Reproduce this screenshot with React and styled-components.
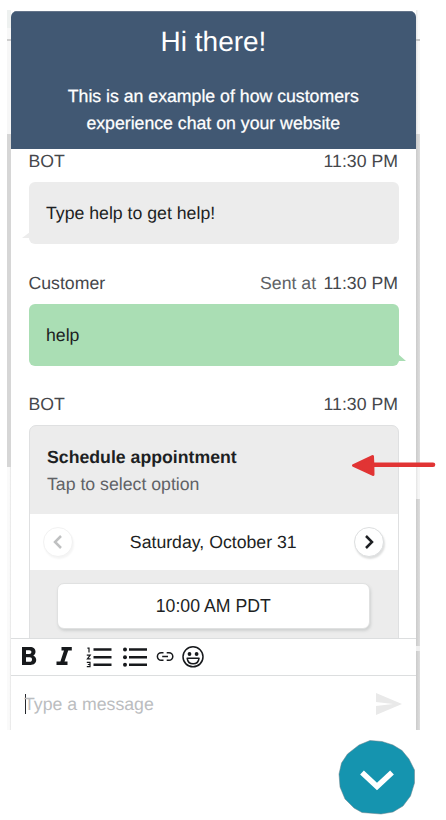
import React from "react";
import styled, { createGlobalStyle } from "styled-components";

const GlobalStyle = createGlobalStyle`
  * { box-sizing: border-box; }
  body {
    margin: 0;
    background: #fff;
    font-family: "Liberation Sans", Arial, sans-serif;
    font-size: 17.7px;
    color: #1d1f23;
    text-rendering: geometricPrecision;
  }
  svg { display: block; }
`;

const Page = styled.main`
  position: relative;
  width: 446px;
  height: 820px;
  overflow: hidden;
  padding: 10px 0 0 7px;
`;

const Stage = styled.div`
  display: flex;
  width: 413px;
  height: 720px;
`;

const Rail = styled.div`
  display: flex;
  flex-direction: column;
  flex: 0 0 4px;
`;

const RailPart = styled.div`
  flex: 0 0 ${(p) => p.$size}px;
  background: ${(p) => p.$tone};
`;

const Panel = styled.section`
  display: flex;
  flex-direction: column;
  width: 405px;
  height: 719px;
  margin-top: 1px;
  background: #fff;
  border-radius: 6px 6px 0 0;
  overflow: hidden;
`;

const Header = styled.header`
  flex: 0 0 138px;
  background: #415873;
  color: #fff;
  text-align: center;
  box-shadow: inset 0 1px 0 #64748a;
`;

const Title = styled.h1`
  margin: 0;
  padding-top: 14px;
  font-size: 28px;
  font-weight: 400;
  line-height: 34px;
`;

const Subtitle = styled.p`
  width: 310px;
  margin: 24px auto 0;
  padding-right: 0.5px;
  line-height: 27px;
  -webkit-text-stroke: 0.25px #fff;
`;

const Messages = styled.div`
  flex: 0 0 489px;
  padding: 0 17.5px 0 17.5px;
  overflow: hidden;
`;

const Message = styled.article`
  margin-bottom: 26.5px;
`;

const Meta = styled.div`
  display: flex;
  justify-content: space-between;
  height: 24px;
  margin-bottom: 9px;
  padding-right: 0.5px;
  line-height: 24px;
  color: #45474b;
`;

const Sent = styled.span`
  margin-right: 7.5px;
  color: #606266;
`;

const Bubble = styled.div`
  position: relative;
  height: 62px;
  padding-left: 17.5px;
  border-radius: 6px;
  line-height: 62px;
  background: ${(p) => (p.$own ? "#aadeb4" : "#ececec")};
`;

const Tail = styled.svg`
  position: absolute;
  bottom: 4px;
  ${(p) => (p.$own ? "right: -7px;" : "left: -7px;")}
  width: 8px;
  height: 8px;
  fill: ${(p) => (p.$own ? "#aadeb4" : "#ececec")};
`;

const Card = styled.div`
  height: 240px;
  border: 1px solid #dfe0e1;
  border-radius: 7px 7px 0 0;
  background: #ececec;
`;

const CardHead = styled.div`
  height: 88px;
  padding: 18px 17.5px 0;
  line-height: 27px;
`;

const CardTitle = styled.div`
  font-weight: 700;
`;

const CardHint = styled.div`
  color: #606266;
`;

const DateRow = styled.div`
  display: flex;
  align-items: center;
  justify-content: space-between;
  height: 56px;
  padding: 0 13.5px 0 13px;
  background: #fff;
`;

const RoundButton = styled.button`
  display: grid;
  place-items: center;
  width: 30px;
  height: 30px;
  padding: 0;
  border: 1px solid ${(p) => (p.$muted ? "#f2f2f2" : "#dddfe0")};
  border-radius: 50%;
  background: #fff;
  color: ${(p) => (p.$muted ? "#bfc0c1" : "#1d1f23")};
  box-shadow: 1px 2px 2px ${(p) => (p.$muted ? "#f5f5f5" : "#dedfdf")};
`;

const SlotArea = styled.div`
  padding: 13px 28px 0 27.5px;
`;

const Slot = styled.button`
  display: block;
  width: 100%;
  height: 46px;
  padding: 1px 0 0;
  border: 1px solid #e0e1e1;
  border-radius: 7px;
  background: #fff;
  box-shadow: 1px 2px 3px #cfd1d1;
  font: inherit;
  color: inherit;
`;

const Toolbar = styled.div`
  flex: 0 0 37px;
  border-top: 1px solid #dcdedf;
`;

const Composer = styled.div`
  display: flex;
  align-items: center;
  flex: 1;
  justify-content: space-between;
  padding: 2px 14px 0 14px;
  border-top: 1px solid #dcdedf;
  color: #bbbdc0;
`;

const Prompt = styled.div`
  display: flex;
  align-items: center;
`;

const Caret = styled.span`
  width: 1px;
  height: 20px;
  margin-right: -2px;
  background: #25282d;
`;

const Launcher = styled.button`
  position: absolute;
  left: 338px;
  top: 739px;
  width: 78px;
  height: 76px;
  padding: 0;
  border: 0;
  background: none;
`;

const Pointer = styled.svg`
  position: absolute;
  left: 351px;
  top: 453px;
`;

const leftRail = [
  [18, "#eef1f0"],
  [11, "#f8f8f8"],
  [2, "#cecece"],
  [93, "#f7f7f7"],
  [333, "#d6d6d6"],
  [263, "linear-gradient(90deg, #fafafa 60%, #e4e4e4)"],
];

const rightRail = [
  [29, "linear-gradient(90deg, #e6e6e6, #fafafa 60%)"],
  [2, "#c4c4c4"],
  [93, "linear-gradient(90deg, #e2e2e2, #f7f7f7 60%)"],
  [333, "linear-gradient(90deg, #cbcbcb, #dedede)"],
  [32, "linear-gradient(90deg, #e4e4e4, #f6f6f6 60%)"],
  [147, "linear-gradient(90deg, #cbcbcb, #dedede)"],
  [5, "#f0f0f0"],
  [79, "linear-gradient(90deg, #cbcbcb, #dedede)"],
];

function SideRail({ parts }) {
  return (
    <Rail>
      {parts.map(([size, tone], i) => (
        <RailPart key={i} $size={size} $tone={tone} />
      ))}
    </Rail>
  );
}

function MessageMeta({ name, sent }) {
  return (
    <Meta>
      <span>{name}</span>
      <span>
        {sent && <Sent>Sent at</Sent>}
        11:30 PM
      </span>
    </Meta>
  );
}

function Chevron({ left }) {
  return (
    <svg width="12" height="16" viewBox="0 0 12 16" fill="none" stroke="currentColor" strokeWidth="2.5">
      <path d={left ? "M9 2 L3 8 L9 14" : "M3 2 L9 8 L3 14"} />
    </svg>
  );
}

function ToolIcons() {
  return (
    <svg width="405" height="36" viewBox="11 639 405 36" fill="none" stroke="#17191c">
      <path
        fill="#17191c"
        stroke="none"
        fillRule="evenodd"
        d="M22 647H30C33.5 647 35.5 649 35.5 651.7C35.5 653.4 34.6 654.8 33.2 655.5C35 656.2 36.2 657.8 36.2 659.8C36.2 663 34 665 30.6 665H22ZM26 650.2V654H29.2C30.6 654 31.4 653.3 31.4 652.1S30.6 650.2 29.2 650.2ZM26 657.2V661.7H29.7C31.2 661.7 32 660.8 32 659.4S31.2 657.2 29.7 657.2Z"
      />
      <path
        fill="#17191c"
        stroke="none"
        d="M61.5 647H71.8V650.4H68.2L64.5 661.6H67.5V665H56.5V661.6H60.4L64 650.4H61.5Z"
      />
      <path strokeWidth="2.4" d="M93.5 649.5H111.5M93.5 657.2H111.5M93.5 664.8H111.5" />
      <path strokeWidth="1.2" d="M87.4 648.2H89V652.6M86.8 655.2H90.2L87.4 658.9H90.6M86.8 662.3H90V666.6H86.8M87.8 664.5H90" />
      <path strokeWidth="2.4" d="M129 649.5H147M129 657.2H147M129 664.8H147" />
      <g fill="#17191c" stroke="none">
        <circle cx="125" cy="649.6" r="2" />
        <circle cx="125" cy="657.2" r="2" />
        <circle cx="125" cy="664.8" r="2" />
      </g>
      <path strokeWidth="1.5" d="M163.5 652.7H161.2A3.8 3.8 0 0 0 161.2 660.3H163.5M166.7 652.7H169A3.8 3.8 0 0 1 169 660.3H166.7M162.2 656.5H168" />
      <circle cx="193" cy="656.8" r="10" strokeWidth="1.5" />
      <g fill="#17191c" stroke="none">
        <circle cx="189.5" cy="654" r="1.9" />
        <circle cx="196.6" cy="654" r="1.9" />
      </g>
      <path strokeWidth="1.5" strokeLinejoin="round" d="M187.2 658.3H199C198.6 662 196.3 663.8 193.1 663.8S187.6 662 187.2 658.3Z" />
    </svg>
  );
}

export default function App() {
  return (
    <Page>
      <GlobalStyle />
      <Stage>
        <SideRail parts={leftRail} />
        <Panel>
          <Header>
            <Title>Hi there!</Title>
            <Subtitle>
              This is an example of how customers
              <br />
              experience chat on your website
            </Subtitle>
          </Header>
          <Messages>
            <Message>
              <MessageMeta name="BOT" />
              <Bubble>
                Type help to get help!
                <Tail viewBox="0 0 8 8">
                  <path d="M8 0V8L7.5 6H0Z" />
                </Tail>
              </Bubble>
            </Message>
            <Message>
              <MessageMeta name="Customer" sent />
              <Bubble $own>
                help
                <Tail $own viewBox="0 0 8 8">
                  <path d="M0 0V8L0.5 7H8Z" />
                </Tail>
              </Bubble>
            </Message>
            <Message>
              <MessageMeta name="BOT" />
              <Card>
                <CardHead>
                  <CardTitle>Schedule appointment</CardTitle>
                  <CardHint>Tap to select option</CardHint>
                </CardHead>
                <DateRow>
                  <RoundButton $muted aria-label="Previous day">
                    <Chevron left />
                  </RoundButton>
                  <span>Saturday, October 31</span>
                  <RoundButton aria-label="Next day">
                    <Chevron />
                  </RoundButton>
                </DateRow>
                <SlotArea>
                  <Slot>10:00 AM PDT</Slot>
                </SlotArea>
              </Card>
            </Message>
          </Messages>
          <Toolbar>
            <ToolIcons />
          </Toolbar>
          <Composer>
            <Prompt>
              <Caret />
              Type a message
            </Prompt>
            <svg width="27" height="24" viewBox="0 0 27 24" fill="#e9e9e9">
              <path d="M1 1L27 12L1 23V14L18 12L1 10Z" />
            </svg>
          </Composer>
        </Panel>
        <SideRail parts={rightRail} />
      </Stage>
      <Pointer width="86" height="26" viewBox="0 0 86 26">
        <path d="M23 11.8H82" stroke="#e13434" strokeWidth="4.6" strokeLinecap="round" />
        <path
          d="M2.5 12.5L21.5 3.5Q22 12 22 21.5Z"
          fill="#e13434"
          stroke="#e13434"
          strokeWidth="3"
          strokeLinejoin="round"
        />
      </Pointer>
      <Launcher aria-label="Close chat">
        <svg width="78" height="76" viewBox="0 0 78 76">
          <path
            d="M32 1.5L44 2.5L55 6L64 11.5L71 20L76.5 31L76.5 44L72.5 57L65 67L55 73L43 75L24 73.5L16 69L7 60L2 48L1 35L3.5 24L9.500 15L21 6Z"
            fill="#1594af"
            stroke="#6d8188"
            strokeWidth="0.5"
          />
          <path d="M24 33.500L39 47.500L54 33.500" fill="none" stroke="#fff" strokeWidth="5.500" />
        </svg>
      </Launcher>
    </Page>
  );
}
